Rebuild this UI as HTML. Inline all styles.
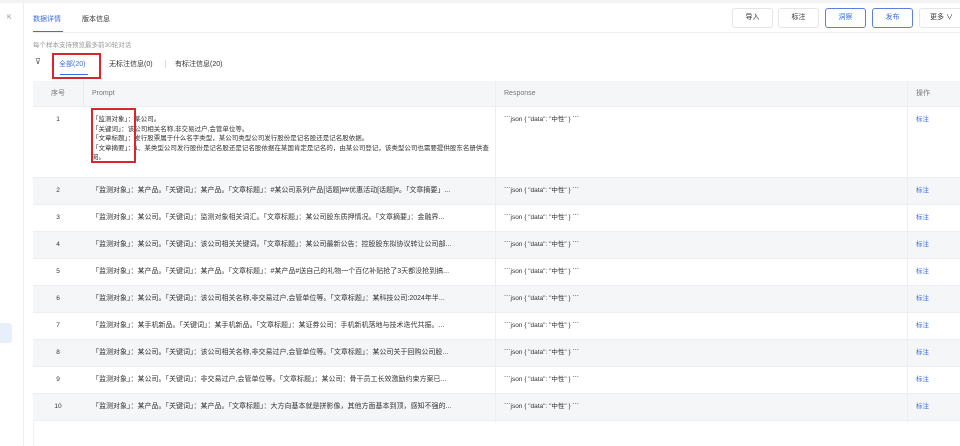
<!DOCTYPE html><html><head><meta charset="utf-8"><style>
*{margin:0;padding:0;box-sizing:border-box}
body{width:960px;height:446px;overflow:hidden;background:#fff;font-family:"Liberation Sans","Noto Sans CJK SC",sans-serif;font-size:7px;color:#333;position:relative}
.a{position:absolute}
.btn{position:absolute;top:8px;height:20px;width:41px;border:1px solid #e3e5e8;border-radius:3px;text-align:center;line-height:18px;font-size:7px;color:#333}
.btn.b{border-color:#5b7fe0;color:#3a6ee8}
.row{position:absolute;left:33px;width:927px;height:27px;border-bottom:1px solid #eceef1;font-size:6.5px;line-height:26px}
.row.g{background:#f5f6f8}
.row span{position:absolute;top:0;white-space:nowrap;overflow:hidden}
.c1{left:0;width:50px;text-align:center}
.c2{left:59px;width:400px;text-overflow:ellipsis;font-size:7px}
.c3{left:471px}
.c4{left:883px;color:#3a6ee8}
.vl{position:absolute;top:81px;width:1px;height:341px;background:#eceef1}
.red{position:absolute;border:2px solid #d9262c}
</style></head><body>
<div class="a" style="left:0;top:0;width:960px;height:3px;background:#f2f3f5"></div>
<div class="a" style="left:23px;top:3px;width:1px;height:443px;background:#eceef1"></div>
<div class="a" style="left:7px;top:14px;color:#999;font-size:7px">K</div>
<div class="a" style="left:0;top:323px;width:12px;height:20px;background:#e8eefc;border-radius:0 3px 3px 0"></div>
<div class="a" style="left:33px;top:14px;color:#3a6ee8">数据详情</div>
<div class="a" style="left:82px;top:14px;color:#333">版本信息</div>
<div class="a" style="left:33px;top:31px;width:30px;height:1px;background:#3a6ee8"></div>
<div class="a" style="left:33px;top:32px;width:927px;height:1px;background:#eceef1"></div>
<div class="btn" style="left:732px">导入</div>
<div class="btn" style="left:778px">标注</div>
<div class="btn b" style="left:825px">洞察</div>
<div class="btn b" style="left:872px">发布</div>
<div class="btn" style="left:919px;width:45px">更多 ∨</div>
<div class="a" style="left:33px;top:39px;color:#999;font-size:6.5px">每个样本支持预览最多前30轮对话</div>
<div class="a" style="left:35px;top:57px;color:#555;font-size:8px">⊽</div>
<div class="a" style="left:59px;top:59px;color:#3a6ee8">全部(20)</div>
<div class="a" style="left:60px;top:74px;width:28px;height:1px;background:#3a6ee8"></div>
<div class="a" style="left:109px;top:59px">无标注信息(0)</div>
<div class="a" style="left:165px;top:60px;width:1px;height:8px;background:#ddd"></div>
<div class="a" style="left:175px;top:59px">有标注信息(20)</div>
<div class="red" style="left:52px;top:53px;width:49px;height:26px"></div>

<div class="row g" style="top:81px;height:26px;color:#777;font-size:7px"><span class="c1">序号</span><span class="c2">Prompt</span><span class="c3">Response</span><span class="c4" style="color:#777">操作</span></div>
<div class="row" style="top:107px;height:71px;line-height:9.5px">
<span class="c1" style="top:8px">1</span>
<span class="c2" style="top:8px;white-space:normal;width:402px;font-size:6.5px">「监测对象」：某公司。<br>「关键词」：该公司相关名称,非交易过户,会管单位等。<br>「文章标题」：发行股票属于什么名字类型，某公司类型公司发行股份是记名股还是记名股依据。<br>「文章摘要」：1、某类型公司发行股份是记名股还是记名股依据在某国肯定是记名的，由某公司登记，该类型公司也需要提供股东名册供查阅。</span>
<span class="c3" style="top:8px">&#96;&#96;&#96;json { "data": "中性" } &#96;&#96;&#96;</span><span class="c4" style="top:8px">标注</span></div>
<div class="row g" style="top:178px"><span class="c1">2</span><span class="c2">「监测对象」：某产品。「关键词」：某产品。「文章标题」：#某公司系列产品[话题]##优惠活动[话题]#。「文章摘要」...</span><span class="c3">&#96;&#96;&#96;json { "data": "中性" } &#96;&#96;&#96;</span><span class="c4">标注</span></div>
<div class="row" style="top:205px"><span class="c1">3</span><span class="c2">「监测对象」：某公司。「关键词」：监测对象相关词汇。「文章标题」：某公司股东质押情况。「文章摘要」：金融界...</span><span class="c3">&#96;&#96;&#96;json { "data": "中性" } &#96;&#96;&#96;</span><span class="c4">标注</span></div>
<div class="row g" style="top:232px"><span class="c1">4</span><span class="c2">「监测对象」：某公司。「关键词」：该公司相关关键词。「文章标题」：某公司最新公告：控股股东拟协议转让公司部...</span><span class="c3">&#96;&#96;&#96;json { "data": "中性" } &#96;&#96;&#96;</span><span class="c4">标注</span></div>
<div class="row" style="top:259px"><span class="c1">5</span><span class="c2">「监测对象」：某产品。「关键词」：某产品。「文章标题」：#某产品#送自己的礼物一个百亿补贴抢了3天都没抢到搞...</span><span class="c3">&#96;&#96;&#96;json { "data": "中性" } &#96;&#96;&#96;</span><span class="c4">标注</span></div>
<div class="row g" style="top:286px"><span class="c1">6</span><span class="c2">「监测对象」：某公司。「关键词」：该公司相关名称,非交易过户,会管单位等。「文章标题」：某科技公司:2024年半...</span><span class="c3">&#96;&#96;&#96;json { "data": "中性" } &#96;&#96;&#96;</span><span class="c4">标注</span></div>
<div class="row" style="top:313px"><span class="c1">7</span><span class="c2">「监测对象」：某手机新品。「关键词」：某手机新品。「文章标题」：某证券公司：手机新机落地与技术迭代共振。...</span><span class="c3">&#96;&#96;&#96;json { "data": "中性" } &#96;&#96;&#96;</span><span class="c4">标注</span></div>
<div class="row g" style="top:340px"><span class="c1">8</span><span class="c2">「监测对象」：某公司。「关键词」：该公司相关名称,非交易过户,会管单位等。「文章标题」：某公司关于回购公司股...</span><span class="c3">&#96;&#96;&#96;json { "data": "中性" } &#96;&#96;&#96;</span><span class="c4">标注</span></div>
<div class="row" style="top:367px"><span class="c1">9</span><span class="c2">「监测对象」：某公司。「关键词」：非交易过户,会管单位等。「文章标题」：某公司：骨干员工长效激励约束方案已...</span><span class="c3">&#96;&#96;&#96;json { "data": "中性" } &#96;&#96;&#96;</span><span class="c4">标注</span></div>
<div class="row g" style="top:394px"><span class="c1">10</span><span class="c2">「监测对象」：某产品。「关键词」：某产品。「文章标题」：大方向基本就是拼影像，其他方面基本到顶，感知不强的...</span><span class="c3">&#96;&#96;&#96;json { "data": "中性" } &#96;&#96;&#96;</span><span class="c4">标注</span></div>
<div class="vl" style="left:83px;height:26px;background:#e8eaee"></div>
<div class="vl" style="left:495px"></div>
<div class="vl" style="left:907px"></div>
<div class="a" style="left:33px;top:422px;width:1px;height:24px;background:#eceef1"></div>
<div class="red" style="left:91px;top:108px;width:45px;height:55px"></div>
</body></html>
